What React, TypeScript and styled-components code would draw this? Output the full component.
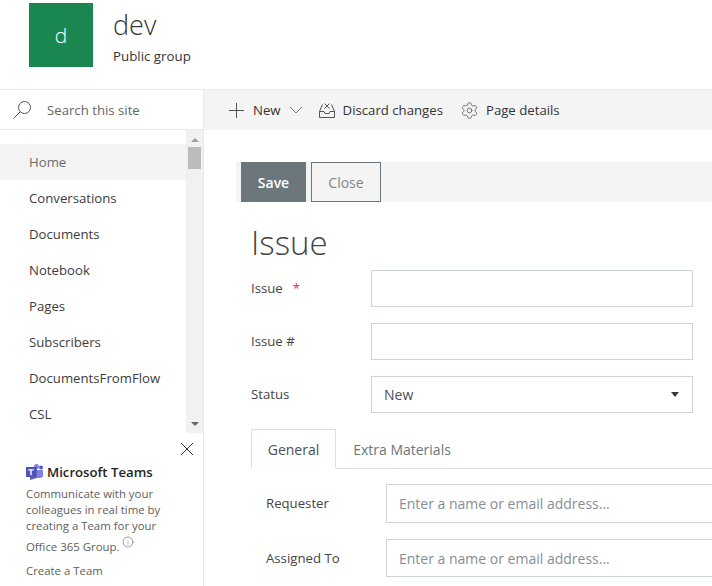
import React from 'react'
import styled, { createGlobalStyle } from 'styled-components'
import { Settings, Info } from 'lucide-react'

const GlobalStyle = createGlobalStyle`
  html, body {
    margin: 0;
    height: 586px;
    overflow: hidden;
    background: #fff;
    font-family: 'Open Sans', 'Noto Sans', sans-serif;
    color: #333;
  }
  * { box-sizing: border-box; }
`

const Page = styled.div`
  width: 712px;
  height: 586px;
  overflow: hidden;
`

const SiteHeader = styled.header`
  display: flex;
  height: 90px;
  padding: 3px 0 0 29px;
  border-bottom: 1px solid #eaeaea;
`

const Logo = styled.div`
  width: 64px;
  height: 64px;
  background: #1a8750;
  color: #fff;
  display: flex;
  align-items: center;
  justify-content: center;
  font-size: 21px;
  font-weight: 300;
`

const SiteInfo = styled.div`
  margin-left: 20px;
`

const SiteTitle = styled.div`
  font-size: 27px;
  font-weight: 300;
  line-height: 36px;
  height: 40px;
  margin-top: 4px;
  color: #333;
`

const SiteSub = styled.div`
  font-size: 13.3px;
  line-height: 18px;
  color: #333;
`

const Body = styled.div`
  display: flex;
  height: 496px;
`

const Sidebar = styled.aside`
  width: 204px;
  flex: none;
  border-right: 1px solid #eaeaea;
  display: flex;
  flex-direction: column;
`

const SearchBox = styled.div`
  height: 40px;
  display: flex;
  align-items: center;
  padding-left: 12px;
  gap: 15px;
  border-bottom: 1px solid #eaeaea;
  font-size: 13.2px;
  color: #666;
`

const NavArea = styled.div`
  display: flex;
  height: 303px;
  flex: none;
`

const NavList = styled.nav`
  width: 186px;
  padding-top: 14px;
`

const NavItem = styled.div<{ $active?: boolean }>`
  height: 36px;
  display: flex;
  align-items: center;
  padding-left: 29px;
  font-size: 13.2px;
  color: ${({ $active }) => ($active ? '#6b6b6b' : '#3c3c3c')};
  background: ${({ $active }) => ($active ? '#f4f4f4' : 'transparent')};
`

const ScrollTrack = styled.div`
  width: 17px;
  background: #f1f1f1;
  display: flex;
  flex-direction: column;
  align-items: center;
  padding-top: 8px;
`

const ScrollThumb = styled.div`
  width: 13px;
  height: 22px;
  background: #bcbcbc;
  margin-top: 5px;
  flex: none;
`

const ScrollArrow = styled.div<{ $down?: boolean }>`
  width: 0;
  height: 0;
  flex: none;
  border-left: 4px solid transparent;
  border-right: 4px solid transparent;
  ${({ $down }) =>
    $down
      ? 'border-top: 4px solid #666; margin-top: auto; margin-bottom: 7px;'
      : 'border-bottom: 4px solid #a0a0a0;'}
`

const TeamsPromo = styled.div`
  position: relative;
  flex: 1;
  padding: 30px 10px 0 26px;
`

const CloseButton = styled.div`
  position: absolute;
  top: 10px;
  right: 10px;
  height: 12px;
  line-height: 0;
`

const TeamsTitle = styled.div`
  display: flex;
  align-items: center;
  gap: 3px;
  font-size: 13.2px;
  font-weight: 600;
  color: #252423;
  height: 18px;
`

const TeamsText = styled.div`
  margin-top: 5px;
  font-size: 11.4px;
  line-height: 16px;
  color: #605e5c;
`

const GroupLine = styled.div`
  display: flex;
  align-items: flex-start;
  gap: 3px;
  margin-top: 5px;
  font-size: 11.4px;
  line-height: 16px;
  color: #605e5c;
`

const InfoMark = styled.span`
  display: block;
  height: 12px;
  margin-top: -3px;
  line-height: 0;
`

const CreateLink = styled.div`
  margin-top: 8px;
  font-size: 11.4px;
  line-height: 16px;
  color: #605e5c;
`

const Main = styled.main`
  flex: 1;
  min-width: 0;
`

const CommandBar = styled.div`
  height: 40px;
  background: #f4f4f4;
  display: flex;
  align-items: center;
  padding-left: 24px;
  font-size: 13.2px;
  color: #333;
`

const Command = styled.div<{ $gap: number; $after: number }>`
  display: flex;
  align-items: center;
  gap: ${({ $gap }) => $gap}px;
  margin-right: ${({ $after }) => $after}px;
`

const FormArea = styled.div`
  padding: 32px 0 0 32px;
`

const FormToolbar = styled.div`
  height: 40px;
  background: #f4f4f4;
  display: flex;
  gap: 5px;
  padding-left: 5px;
`

const Btn = styled.div<{ $primary?: boolean }>`
  display: flex;
  align-items: center;
  justify-content: center;
  height: 40px;
  width: ${({ $primary }) => ($primary ? '65px' : '70px')};
  font-size: 14px;
  font-weight: ${({ $primary }) => ($primary ? 600 : 400)};
  color: ${({ $primary }) => ($primary ? '#fff' : '#7c878c')};
  background: ${({ $primary }) => ($primary ? '#6b777c' : 'transparent')};
  border: 1px solid #6b777c;
`

const Form = styled.div`
  padding-left: 15px;
`

const Heading = styled.h1`
  margin: 0;
  height: 68px;
  padding-top: 18px;
  font-size: 33px;
  line-height: 45px;
  font-weight: 300;
  color: #444;
`

const Row = styled.div<{ $h: number; $after: number }>`
  display: flex;
  align-items: center;
  height: ${({ $h }) => $h}px;
  margin-bottom: ${({ $after }) => $after}px;
`

const Label = styled.div<{ $w: number }>`
  width: ${({ $w }) => $w}px;
  flex: none;
  font-size: 13.2px;
  color: #444;
  padding-bottom: 1px;
`

const Required = styled.span`
  color: #dc3545;
  margin-left: 10px;
`

const Field = styled.div<{ $w?: number }>`
  width: ${({ $w }) => ($w ? `${$w}px` : '340px')};
  flex: none;
  height: 100%;
  border: 1px solid #ced4da;
  background: #fff;
  display: flex;
  align-items: center;
  justify-content: space-between;
  padding: 0 12px;
  font-size: 14px;
  color: #495057;
`

const Placeholder = styled.span`
  color: #868e96;
  font-size: 14px;
`

const SelectArrow = styled.span`
  width: 0;
  height: 0;
  border-left: 4px solid transparent;
  border-right: 4px solid transparent;
  border-top: 5px solid #343a40;
  margin-right: 1px;
`

const Tabs = styled.div`
  display: flex;
  height: 40px;
  margin-top: 16px;
  border-bottom: 1px solid #dee2e6;
`

const Tab = styled.div<{ $active?: boolean }>`
  height: 40px;
  display: flex;
  align-items: center;
  justify-content: center;
  width: ${({ $active }) => ($active ? '85px' : '132px')};
  font-size: 14px;
  color: ${({ $active }) => ($active ? '#495057' : '#6c757d')};
  border: 1px solid ${({ $active }) => ($active ? '#dee2e6' : 'transparent')};
  border-bottom: 1px solid ${({ $active }) => ($active ? '#fff' : 'transparent')};
`

const TabPanel = styled.div`
  padding: 15px 0 0 15px;
`

const SearchIcon = () => (
  <svg width="20" height="20" viewBox="0 0 20 20" fill="none" stroke="#555" strokeWidth="1">
    <circle cx="12.5" cy="7.5" r="6" />
    <path d="M8.2 11.8L1.5 18.5" />
  </svg>
)

const PlusIcon = () => (
  <svg width="17" height="17" viewBox="0 0 17 17" stroke="#555" strokeWidth="1">
    <path d="M1 8.5h15M8.5 1v15" />
  </svg>
)

const ChevronIcon = () => (
  <svg width="14" height="8" viewBox="0 0 14 8" fill="none" stroke="#777" strokeWidth="1">
    <path d="M1 1l6 6 6-6" />
  </svg>
)

const CloseIcon = () => (
  <svg width="12" height="12" viewBox="0 0 12 12" stroke="#333" strokeWidth="1">
    <path d="M0 0l12 12M12 0L0 12" />
  </svg>
)

const DiscardIcon = () => (
  <svg width="16" height="16" viewBox="0 0 16 16" fill="none" stroke="#555" strokeWidth="1">
    <path d="M.5 9.5v6h15v-6l-3-7M.5 9.5l3-7M.5 9.5h4.5l1 2h4l1-2h4.500" />
    <path d="M5.500 1.500l5 5M10.500 1.500l-5 5" />
  </svg>
)

const TeamsLogo = () => (
  <svg width="18" height="18" viewBox="0 0 18 18">
    <path fill="#7b83eb" d="M11 7h6v5a3 3 0 0 1-3 3h-3z" />
    <circle cx="15" cy="4.500" r="2" fill="#5059c9" />
    <circle cx="10.500" cy="3.500" r="2.500" fill="#7b83eb" />
    <path fill="#6264a7" d="M4 4h7v11l-7 2z" />
    <rect x="0" y="4" width="10" height="10" fill="#4b53bc" />
    <path fill="#fff" d="M2.200 6.200h5.600v1.300H5.700v4.800H4.300V7.500H2.200z" />
  </svg>
)

const navItems = ['Home', 'Conversations', 'Documents', 'Notebook', 'Pages', 'Subscribers', 'DocumentsFromFlow', 'CSL']

export default function App() {
  return (
    <Page>
      <GlobalStyle />
      <SiteHeader>
        <Logo>d</Logo>
        <SiteInfo>
          <SiteTitle>dev</SiteTitle>
          <SiteSub>Public group</SiteSub>
        </SiteInfo>
      </SiteHeader>
      <Body>
        <Sidebar>
          <SearchBox>
            <SearchIcon />
            Search this site
          </SearchBox>
          <NavArea>
            <NavList>
              {navItems.map((item, i) => (
                <NavItem key={item} $active={i === 0}>{item}</NavItem>
              ))}
            </NavList>
            <ScrollTrack>
              <ScrollArrow />
              <ScrollThumb />
              <ScrollArrow $down />
            </ScrollTrack>
          </NavArea>
          <TeamsPromo>
            <CloseButton><CloseIcon /></CloseButton>
            <TeamsTitle><TeamsLogo />Microsoft Teams</TeamsTitle>
            <TeamsText>Communicate with your<br />colleagues in real time by<br />creating a Team for your</TeamsText>
            <GroupLine>Office 365 Group. <InfoMark><Info size={12} strokeWidth={1.2} color="#605e5c" /></InfoMark></GroupLine>
            <CreateLink>Create a Team</CreateLink>
          </TeamsPromo>
        </Sidebar>
        <Main>
          <CommandBar>
            <Command $gap={8} $after={8}><PlusIcon />New</Command>
            <Command $gap={0} $after={16}><ChevronIcon /></Command>
            <Command $gap={8} $after={17}><DiscardIcon />Discard changes</Command>
            <Command $gap={7} $after={0}><Settings size={19} strokeWidth={1} color="#555" />Page details</Command>
          </CommandBar>
          <FormArea>
            <FormToolbar>
              <Btn $primary>Save</Btn>
              <Btn>Close</Btn>
            </FormToolbar>
            <Form>
              <Heading>Issue</Heading>
              <Row $h={37} $after={16}>
                <Label $w={120}>Issue<Required>*</Required></Label>
                <Field $w={322} />
              </Row>
              <Row $h={37} $after={16}>
                <Label $w={120}>Issue #</Label>
                <Field $w={322} />
              </Row>
              <Row $h={37} $after={0}>
                <Label $w={120}>Status</Label>
                <Field $w={322}>New<SelectArrow /></Field>
              </Row>
              <Tabs>
                <Tab $active>General</Tab>
                <Tab>Extra Materials</Tab>
              </Tabs>
              <TabPanel>
                <Row $h={39} $after={16}>
                  <Label $w={120}>Requester</Label>
                  <Field><Placeholder>Enter a name or email address...</Placeholder></Field>
                </Row>
                <Row $h={38} $after={0}>
                  <Label $w={120}>Assigned To</Label>
                  <Field><Placeholder>Enter a name or email address...</Placeholder></Field>
                </Row>
              </TabPanel>
            </Form>
          </FormArea>
        </Main>
      </Body>
    </Page>
  )
}
